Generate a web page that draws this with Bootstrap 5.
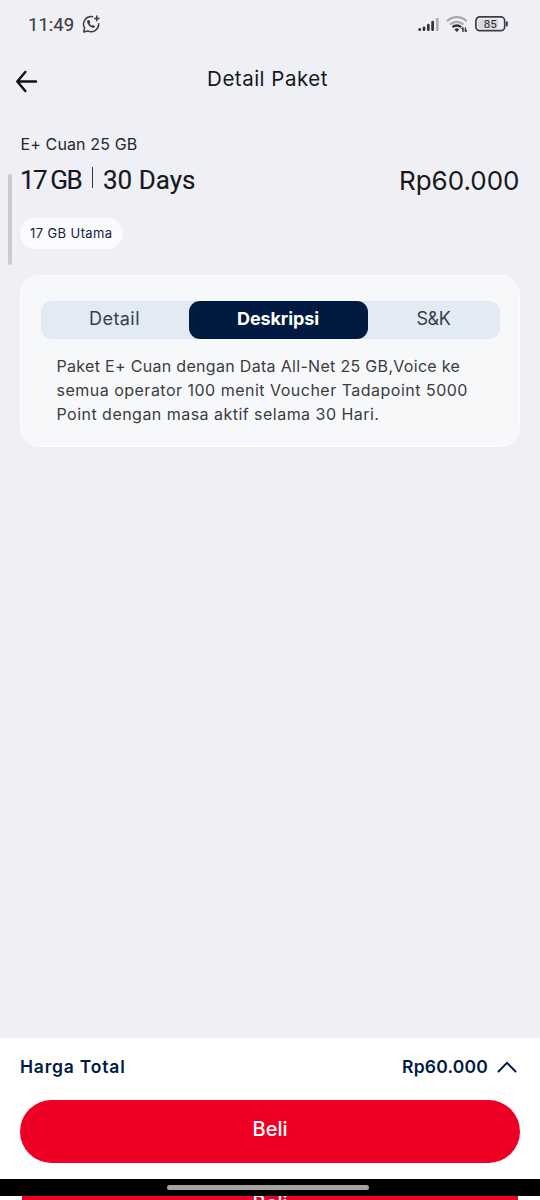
<!DOCTYPE html>
<html lang="id">
<head>
<meta charset="utf-8">
<meta name="viewport" content="width=device-width, initial-scale=1">
<title>Detail Paket</title>
<link href="https://cdn.jsdelivr.net/npm/bootstrap@5.3.0/dist/css/bootstrap.min.css" rel="stylesheet">
<style>
body { background: #eff0f5; color: #16181d; font-family: Inter, "Liberation Sans", sans-serif; font-size: 16px; line-height: 24px; }
svg { display: block; flex: none; }
.screen { height: 1200px; overflow: hidden; }
.status { height: 48px; padding: 0 31px 0 28px; color: #3c3d42; }
.clock { font: 400 18.5px/24px Roboto, sans-serif; padding-top: 1px; -webkit-text-stroke: .15px; }
.topbar { height: 62px; padding: 0 15px; }
.topbar h1 { font-size: 20.5px; line-height: 28px; font-weight: 400; letter-spacing: .5px; width: 21px; flex: 1; padding-right: 28px; }
.summary { padding: 22px 20px 0; }
.pack { letter-spacing: .13px; padding-left: .5px; color: #25272d; }
.plan { padding-top: 6px; }
.quota { font: 400 26px/36px Roboto, sans-serif; height: 36px; -webkit-text-stroke: .15px; }
.quota .gb { letter-spacing: -1.6px; word-spacing: -.5px; }
.quota .rule { width: 1.4px; height: 21px; background: #33353a; margin: 5px 9.5px 0 11px; }
.price { font-size: 26px; line-height: 37px; padding-right: .5px; }
.chip { height: 31px; padding: 0 10px 1px; background: #fafbfd; color: #14213f; font-size: 13px; letter-spacing: .4px; margin-top: 19px; }
.panel { margin: 26px 20px 0; height: 172px; padding: 24.5px 19.5px; border: 1.5px solid #fdfdfe; border-radius: 20px; background: #f7f8fa; }
.tabs { height: 38px; background: #e2eaf4; border-radius: 11px; font-size: 18px; color: #3a3e49; }
.tabs > div { padding-bottom: 2px; letter-spacing: .45px; }
.tabs .sk { letter-spacing: -.4px; }
.tabs .on { background: #001a41; color: #fff; border-radius: 11px; font-weight: 700; letter-spacing: -.1px; }
.desc { padding: 15.5px 0 0 16px; color: #3a3c41; white-space: nowrap; }
.l1 { letter-spacing: .31px; } .l2 { letter-spacing: .49px; } .l3 { letter-spacing: .47px; }
.buy { height: 141px; background: #fff; padding: 17px 20px 0; }
.total { height: 24px; font-size: 17.5px; font-weight: 600; color: #001a41; }
.beli { height: 63px; border-radius: 32px; background: #ee0024; color: #fff; font-size: 20px; font-weight: 500; margin-top: 21px; padding-bottom: 5px; }
.gesture { height: 17px; background: #000; padding-right: 4px; }
.gesture div { width: 202px; height: 5px; background: #a5a3a1; }
.echo { height: 4px; margin: 0 22px; background: #ee0024; color: #fff; font-size: 20px; font-weight: 500; line-height: 15px; overflow: hidden; }
.scrollbar-thumb { left: 8px; top: 174px; width: 4px; height: 91px; background: #c9cacf; }
</style>
</head>
<body>
<div class="screen d-flex flex-column position-relative">
  <div class="status d-flex align-items-center">
    <span class="clock">11:49</span>
    <svg class="ms-2" width="19" height="19" viewBox="0 0 19 19" fill="none" stroke="#3c3d42" stroke-width="1.5">
      <path d="M11.200 1.800A7.600 7.600 0 0 0 2.600 12.900L1.700 16.900 5.600 15.900A7.600 7.600 0 0 0 16.600 8.200" stroke-linejoin="round"/>
      <path d="M14.800.6v5.600M12 3.400h5.600"/>
      <path d="M6 4.900c-1.100.7-1.200 2-.4 3.500 1.100 2 2.700 3.600 4.700 4.300 1.200.4 2.300.1 2.900-1.100l-2.100-1.600-1.300.8c-1-.6-1.700-1.400-2.200-2.400l.7-1.200-1-2.300z" fill="#3c3d42" stroke="none"/>
    </svg>
    <svg class="ms-auto" width="22" height="15" viewBox="0 0 22 15" stroke-width="2.700" stroke-linecap="round">
      <path d="M1.700 12.700v-.4M6 12.700v-1.900M10.300 12.700V8.200M14.600 12.700V5.200" stroke="#303238"/>
      <path d="M19.300 14V1" stroke="#aeb0b5" stroke-linecap="butt"/>
    </svg>
    <svg style="margin-left:6px" width="22" height="18" viewBox="0 0 22 18" fill="none" stroke-width="2.200">
      <path d="M1 6.200a14 14 0 0 1 19.600 0M4.100 9.500a9.700 9.700 0 0 1 13.400 0" stroke="#a7a9ae"/>
      <path d="M6.500 12.200a6.200 6.200 0 0 1 8.600 0" stroke="#303238" stroke-width="2.400"/>
      <path d="M8.400 14.400a3.400 3.400 0 0 1 4.800 0l-2.400 2.500z" fill="#303238"/>
      <path d="M17 12.600v4.300M15.600 14.100l1.400-1.600M19.400 12.400v4.400M20.800 15.200l-1.400 1.600" stroke="#303238" stroke-width="1.400"/>
    </svg>
    <svg style="margin-left:7px" width="34" height="16" viewBox="0 0 34 16">
      <rect x=".9" y=".9" width="28.800" height="13.800" rx="4" fill="none" stroke="#3c3d42" stroke-width="1.700"/>
      <rect x="3.200" y="3.200" width="20" height="9.200" rx="1.500" fill="#d6d7dc"/>
      <path d="M31.900 6.200v3.400" stroke="#3c3d42" stroke-width="1.800" stroke-linecap="round"/>
      <text x="15.200" y="11.900" text-anchor="middle" font-family="Roboto, sans-serif" font-size="11.500" fill="#26282d">85</text>
    </svg>
  </div>

  <header class="topbar d-flex align-items-center">
    <svg style="margin-top:4px" width="23" height="23" viewBox="0 0 23 23" fill="none" stroke="#101216" stroke-width="2.500" stroke-linecap="round" stroke-linejoin="round"><path d="M21 11.500H2.300M10.300 2 2.300 11.500l8 9.500"/></svg>
    <h1 class="text-center m-0">Detail Paket</h1>
  </header>

  <section class="summary">
    <div class="pack">E+ Cuan 25 GB</div>
    <div class="plan d-flex justify-content-between">
      <div class="quota d-flex"><span class="gb">17 GB</span><span class="rule"></span><span>30 Days</span></div>
      <div class="price">Rp60.000</div>
    </div>
    <div class="chip rounded-pill d-inline-flex align-items-center">17 GB Utama</div>
  </section>

  <section class="panel">
    <div class="tabs d-flex text-center">
      <div class="d-flex align-items-center justify-content-center" style="width:148px">Detail</div>
      <div class="on d-flex align-items-center justify-content-center" style="width:179px">Deskripsi</div>
      <div class="sk d-flex align-items-center justify-content-center flex-fill">S&amp;K</div>
    </div>
    <div class="desc">
      <div class="l1">Paket E+ Cuan dengan Data All-Net 25 GB,Voice ke</div>
      <div class="l2">semua operator 100 menit Voucher Tadapoint 5000</div>
      <div class="l3">Point dengan masa aktif selama 30 Hari.</div>
    </div>
  </section>

  <footer class="mt-auto">
    <div class="buy">
      <div class="total d-flex align-items-center">
        <span style="letter-spacing:.8px">Harga Total</span>
        <span class="ms-auto" style="letter-spacing:.2px">Rp60.000</span>
        <svg style="margin:0 3px 0 9px" width="20" height="12" viewBox="0 0 20 12" fill="none" stroke="#001a41" stroke-width="1.900" stroke-linecap="round"><path d="M1.500 10.500 10 1.800l8.500 8.700"/></svg>
      </div>
      <div class="beli d-flex align-items-center justify-content-center">Beli</div>
    </div>
    <div class="gesture d-flex align-items-center justify-content-center"><div class="rounded-pill"></div></div>
    <div class="bg-white"><div class="echo text-center">Beli</div></div>
  </footer>
  <div class="scrollbar-thumb position-absolute rounded-pill"></div>
</div>
<script src="https://cdn.jsdelivr.net/npm/bootstrap@5.3.0/dist/js/bootstrap.bundle.min.js"></script>
</body>
</html>
